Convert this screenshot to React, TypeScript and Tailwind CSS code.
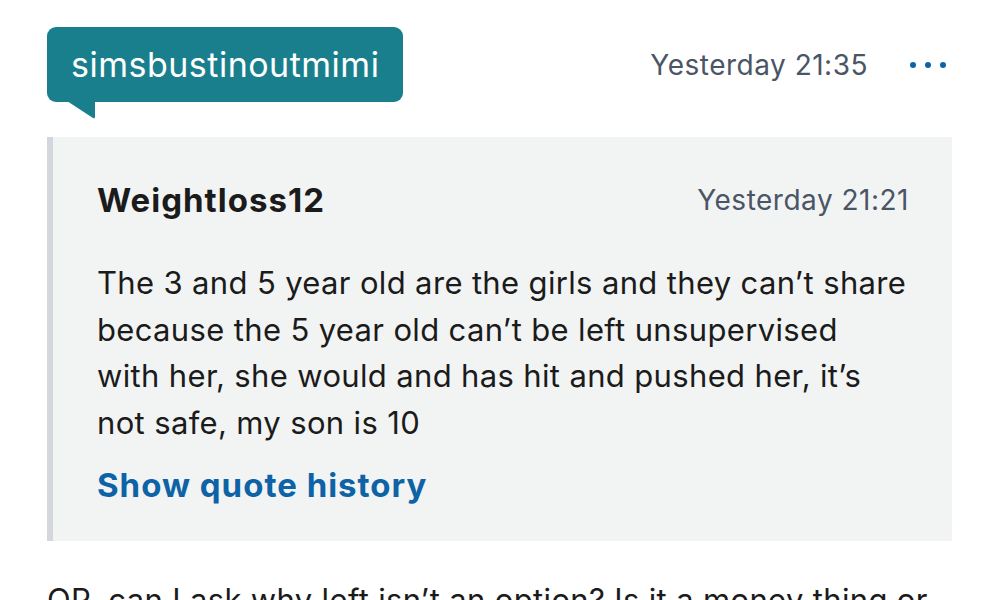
import React from 'react';

const font = { fontFamily: 'Inter, "Noto Sans", sans-serif' };

export default function App() {
  return (
    <div className="min-h-screen bg-white px-[47px] pt-[27px] overflow-hidden" style={font}>
      {/* Header: username bubble + time + menu */}
      <div className="flex items-start justify-between">
        <div className="relative">
          <div className="bg-[#1a7f8d] rounded-[9px] h-[75px] w-[356px] pl-[24px] flex items-center">
            <span className="text-white text-[34px] leading-[40px] tracking-[0.5px]">simsbustinoutmimi</span>
          </div>
          {/* speech tail */}
          <svg className="absolute left-[20px] top-[74px]" width="29" height="18" viewBox="0 0 29 18">
            <path d="M0 0 L28 0 L28 16 Q28 18 26 17 Z" fill="#1a7f8d" />
          </svg>
        </div>
        <div className="flex items-center h-[75px]">
          <span className="text-[28px] leading-[34px] text-[#4a5566] tracking-[0.5px]">Yesterday 21:35</span>
          <div className="flex items-center gap-[9px] ml-[42px] mr-[6px]">
            <span className="w-[6px] h-[6px] rounded-full bg-[#0e63a6]" />
            <span className="w-[6px] h-[6px] rounded-full bg-[#0e63a6]" />
            <span className="w-[6px] h-[6px] rounded-full bg-[#0e63a6]" />
          </div>
        </div>
      </div>

      {/* Quote block */}
      <div className="mt-[35px] bg-[#f2f4f4] border-l-[6px] border-[#d3d6dc] pl-[44px] pr-[43px] pt-[40px] pb-[34px]">
        <div className="flex items-center justify-between h-[45px]">
          <span className="text-[33px] leading-[40px] font-bold text-[#1b1b1b] tracking-[1px]">Weightloss12</span>
          <span className="text-[28px] leading-[34px] text-[#4a5566] tracking-[0.5px]">Yesterday 21:21</span>
        </div>
        <p className="mt-[38px] text-[31px] leading-[46.5px] text-[#1b1b1b] tracking-[0.35px] whitespace-nowrap">
          The 3 and 5 year old are the girls and they can’t share
          <br />
          because the 5 year old can’t be left unsupervised
          <br />
          with her, she would and has hit and pushed her, it’s
          <br />
          not safe, my son is 10
        </p>
        <div className="mt-[16px] h-[45px] flex items-center text-[33px] leading-[40px] font-bold text-[#0e63a6] tracking-[1px]">
          Show quote history
        </div>
      </div>

      <p className="mt-[36px] text-[31px] leading-[46.5px] text-[#1b1b1b] tracking-[0.35px] whitespace-nowrap">
        OP, can I ask why left isn’t an option? Is it a money thing or
      </p>
    </div>
  );
}
